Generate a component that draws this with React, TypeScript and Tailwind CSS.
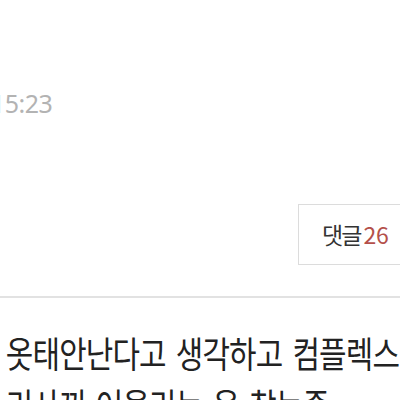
const App = () => {
  return (
    <div
      className="w-[400px] h-[400px] overflow-hidden bg-white"
      style={{ fontFamily: '"Noto Sans CJK KR", "Noto Sans", sans-serif' }}
    >
      {/* post date */}
      <div className="pt-[87px] h-[200px] overflow-hidden">
        <p
          className="-ml-[9px] text-[25px] leading-[32px] text-[#b3b3b3] tracking-[-0.5px]"
          style={{ fontFamily: '"Noto Sans", sans-serif' }}
        >
          15:23
        </p>
      </div>

      {/* comment count */}
      <div className="flex justify-end -mr-[30px] mt-[4px]">
        <div className="w-[132px] h-[61px] border border-[#dcdcdc] flex items-center pl-[23px]">
          <span className="text-[23px] text-[#333] tracking-[-2px] whitespace-nowrap">
            댓글 <span className="text-[#b4504a] tracking-[-0.3px]">26</span>
          </span>
        </div>
      </div>

      <div className="mt-[31px] h-[2px] bg-[#e2e2e2]" />

      {/* post body */}
      <div className="mt-[28px] pl-[7px] whitespace-nowrap text-[36px] leading-[52px] text-[#222] tracking-[-1px] [word-spacing:5px] origin-left scale-x-[0.83]">
        <p>옷태안난다고 생각하고 컴플렉스였는데 어울리는</p>
        <p>리사끼 어울리는 옷 찾는중</p>
      </div>
    </div>
  );
};

export default App;
